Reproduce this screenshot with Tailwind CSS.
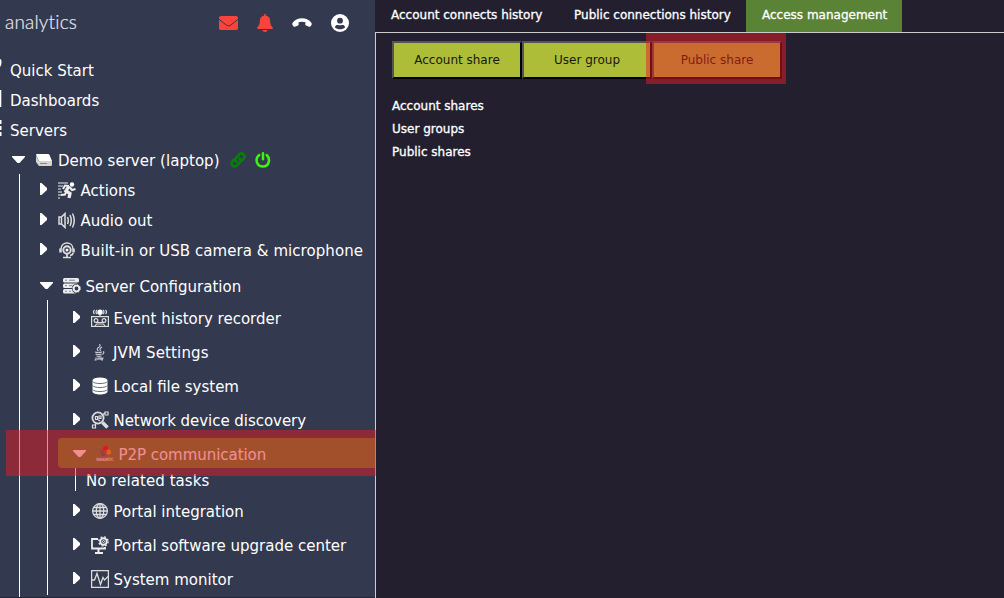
<!DOCTYPE html>
<html lang="en">
<head>
  <meta charset="utf-8">
  <title>Access management</title>
  <script src="https://cdn.jsdelivr.net/npm/@tailwindcss/browser@4"></script>
</head>
<body class="relative w-[1004px] h-[598px] overflow-hidden flex bg-[#231f2f] text-white font-['DejaVu_Sans',sans-serif]">
  <svg class="hidden">
    <symbol id="right" viewBox="0 0 7 12"><path d="M0 0h1.500L7 5v2l-5.500 5H0z" fill="#fff"/></symbol>
    <symbol id="down" viewBox="0 0 13 7"><path d="M0 0h13v1L7.500 7h-2L0 1z" fill="#fff"/></symbol>
  </svg>

  <!-- Sidebar -->
  <aside class="w-[375px] h-[598px] shrink-0 overflow-hidden bg-[#33394f] text-[15px] leading-[22px] whitespace-nowrap border-b border-[#222735] [&_span]:pt-[2px]">
    <header class="h-[55px] flex items-start">
      <div class="w-[219px] pl-[5px] pt-[10px] text-[19px] leading-6 tracking-[0.2px] text-[#e6e8ee] font-light font-['Lato',sans-serif] [-webkit-text-stroke:0.2px_#e6e8ee]">analytics</div>
      <svg class="w-[19px] h-[14px] mt-4" viewBox="0 0 19 14">
        <rect width="19" height="14" rx="1.800" fill="#f8443a"/>
        <path d="M0 3.300l7.600 6q1.900 1.300 3.800 0l7.600-6" fill="none" stroke="#33394f" stroke-width="1"/>
      </svg>
      <svg class="w-4 h-[18px] mt-[14px] ml-[19px]" viewBox="0 0 16 18" fill="#f8443a">
        <path d="M7.200 0h1.600v1.500c2.800.5 4.300 2.500 4.300 5 0 4 1.200 5.500 2.500 6.800.8.800.3 1.700-.7 1.700H1.100c-1 0-1.500-.9-.7-1.700C1.700 12 2.900 10.500 2.900 6.500c0-2.500 1.500-4.500 4.300-5zM5.300 16h5.400c-.4 2.500-5 2.500-5.400 0z"/>
      </svg>
      <svg class="w-5 h-[9px] mt-[18px] ml-[19px]" viewBox="0 0 20 9" fill="#fff">
        <path d="M.5 5C4-1.300 16-1.300 19.500 5c.4.800.3 1.600-.2 2.200l-.9 1.200c-.4.400-.9.500-1.400.300l-3-1.200c-.5-.2-.8-.7-.7-1.200l.2-2c-2.200-.8-4.800-.8-7 0l.2 2c.1.500-.2 1-.7 1.200l-3 1.200c-.5.200-1 .1-1.400-.3L.7 7.200C.2 6.600.1 5.800.5 5z"/>
      </svg>
      <svg class="w-[18px] h-[18px] mt-[14px] ml-[19px]" viewBox="0 0 18 18">
        <circle cx="9" cy="9" r="9" fill="#fff"/>
        <circle cx="9" cy="6.700" r="2.900" fill="#33394f"/>
        <path d="M3.800 13.200c.8-1.900 1.900-2.400 3.200-2.100 1.300.3 2.700.3 4 0 1.300-.3 2.400.2 3.200 2.100-2.700 2.700-7.700 2.700-10.400 0z" fill="#33394f"/>
      </svg>
    </header>

    <!-- Top level links -->
    <nav class="relative">
      <div class="h-[30px] flex items-center pl-[10px]"><span>Quick Start</span></div>
      <div class="h-[30px] flex items-center pl-[10px]"><span>Dashboards</span></div>
      <div class="h-[30px] flex items-center pl-[10px]"><span>Servers</span></div>
      <!-- Icons cut off by the window edge -->
      <svg class="absolute left-0 top-0 w-[2px] h-[90px]" viewBox="0 0 2 90" fill="#fff">
        <path d="M0 4c1 0 1.500 1 1.500 3S1 11 0 12zM0 35h1.300v17H0zM0 65h1.500v4H0zM0 71h1.500v4H0zM0 77h1.500v4H0z"/>
      </svg>
    </nav>

    <!-- Server tree -->
    <div class="h-[30px] flex items-center pl-3">
      <svg class="w-[13px] h-[7px] mb-[2px]"><use href="#down"/></svg>
      <svg class="w-[17px] h-[12px] ml-[11px] mr-[5px]" viewBox="0 0 17 12">
        <path d="M1 0h11q1 0 1.500 1L16 7H3L0 1q0-1 1-1z" fill="#fff"/>
        <path d="M0 2l3 5h13v4q0 1-1 1H3L0 8z" fill="#d4d4d4"/>
        <path d="M4 9.500h7" stroke="#888"/>
      </svg>
      <span class="tracking-[0.04px]">Demo server (laptop)</span>
      <svg class="w-4 h-4 ml-[10px]" viewBox="0 0 16 16" fill="none" stroke="#0c7b12" stroke-width="2.600" stroke-linecap="round">
        <path d="M6.500 9.500C5 8 5.300 6.500 6.400 5.400l2.800-2.900c3-2.700 7 1 4.400 4.200l-1.900 2M9.500 6.500c1.500 1.500 1.200 3 .1 4.100l-2.800 2.900c-3 2.700-7-1-4.400-4.200l1.900-2"/>
      </svg>
      <svg class="w-4 h-4 ml-[9px]" viewBox="0 0 16 16" fill="none" stroke="#3bf50f" stroke-width="2.500" stroke-linecap="round">
        <path d="M4.300 3C-.5 6.600 1.500 14.500 8 14.500S15.500 6.600 11.700 3M8 1.300v6"/>
      </svg>
    </div>

    <div class="-mt-px pt-px ml-[19px] h-[424px] border-l border-white">
      <div class="h-[30px] flex items-center pl-5">
        <svg class="w-[7px] h-3 mb-[2px]"><use href="#right"/></svg>
        <svg class="w-[18px] h-[17px] ml-[11px] mr-[4.500px]" viewBox="0 0 18 17" fill="none" stroke="#eee">
          <path d="M0 1h10M0 4h5M0 7h3M0 10h4M0 13h3M0 16h2" stroke-width="1"/>
          <circle cx="14" cy="2.500" r="2.200" fill="#fff" stroke="none"/>
          <path d="M11 4L8 9l4 2.500-1 4.500" stroke-width="3.300"/>
          <path d="M11 4L7 3.500 5 7M11.500 5l2.500 3 3.500-1M8.500 9L7 12.500l-4 .5" stroke-width="2"/>
        </svg>
        <span>Actions</span>
      </div>
      <div class="h-[30px] flex items-center pl-5">
        <svg class="w-[7px] h-3 mb-[2px]"><use href="#right"/></svg>
        <svg class="w-[18px] h-[17px] ml-[11px] mr-[4.500px]" viewBox="0 0 18 17" fill="none" stroke="#ddd" stroke-width="1.500">
          <path d="M1 5h2.500L7 1.500v14L3.500 12H1zM3.500 5v7M9.500 5q1.500 3.500 0 7M12 3q2.500 5.500 0 11M14.500 1.500q3.500 7 0 14"/>
        </svg>
        <span>Audio out</span>
      </div>
      <div class="h-[30px] flex items-center pl-5">
        <svg class="w-[7px] h-3 mb-[2px]"><use href="#right"/></svg>
        <svg class="w-[18px] h-[17px] ml-[11px] mr-[4.500px]" viewBox="0 0 18 17" fill="none" stroke="#ddd">
          <path d="M3 7C3-1 15-1 15 7" stroke-width="1.400"/>
          <path d="M2.500 6.500v4M15.500 6.500v4" stroke-width="2.500"/>
          <circle cx="9" cy="8" r="3.700" stroke-width="2"/>
          <circle cx="9" cy="8" r="1.500" fill="#fff" stroke="none"/>
          <path d="M9 12v3M5 15.500h8M15 11q0 2-3 2.500" stroke-width="1.700"/>
        </svg>
        <span class="tracking-[0.060px]">Built-in or USB camera &amp; microphone</span>
      </div>

      <div class="h-9 pt-[6px] flex items-center pl-5">
        <svg class="w-[13px] h-[7px] mb-[2px]"><use href="#down"/></svg>
        <svg class="w-[18px] h-4 ml-[10px] mr-[4.500px]" viewBox="0 0 18 16">
          <g fill="#eee">
            <rect width="16" height="4.500" rx="1.500"/>
            <rect y="5.500" width="15" height="4.500" rx="1.500"/>
            <rect y="11" width="13" height="4.500" rx="1.500"/>
          </g>
          <path d="M2 2.200h2M6 2.200h6M2 7.700h2M6 7.700h3M2 13.200h2M6 13.200h2" stroke="#7d8398" stroke-width="1"/>
          <circle cx="13.500" cy="10.500" r="4.800" fill="#33394f"/>
          <circle cx="13.500" cy="10.500" r="2.800" fill="none" stroke="#eee" stroke-width="1.800"/>
          <circle cx="13.500" cy="10.500" r="3.900" fill="none" stroke="#eee" stroke-dasharray="1.530"/>
        </svg>
        <span>Server Configuration</span>
      </div>

      <!-- Configuration children -->
      <div class="-mt-px pt-px ml-[27px] h-[295px] border-l border-white">
        <div class="h-[34px] flex items-center pl-[25px]">
          <svg class="w-[7px] h-3 mb-[2px]"><use href="#right"/></svg>
          <svg class="w-[18px] h-[18px] ml-[11px] mr-[4.500px]" viewBox="0 0 18 18" fill="none" stroke="#ddd" stroke-width="1.200">
            <rect x=".6" y="7.600" width="16.800" height="9.800"/>
            <circle cx="5" cy="11.500" r="1.900"/><circle cx="13" cy="11.500" r="1.900"/>
            <path d="M5 13.500h8M4 17l1.500-2h7l1.500 2M6 1q-2 2 0 4M12 1q2 2 0 4M3.500 1q-2 2 0 4M14.500 1q2 2 0 4"/>
            <circle cx="9" cy="3.200" r="2.700" fill="#fff" stroke="none"/>
            <path d="M9 5v3"/>
          </svg>
          <span>Event history recorder</span>
        </div>
        <div class="h-[34px] flex items-center pl-[25px]">
          <svg class="w-[7px] h-3 mb-[2px]"><use href="#right"/></svg>
          <svg class="w-[18px] h-[18px] ml-[10px] mr-[5px]" viewBox="0 0 18 18" fill="none" stroke="#c9ccd5" stroke-width="1.200">
            <path d="M9.500 1q1.500 2-1 3.500t0 3.500M12 4q-3 1.500-1.500 4M5 9q3 1 7 0M5.500 11q3 1 6 0M6.500 13q2.500.6 5 0M13 8.500q2 .5-.5 3"/>
            <path d="M6 14.500v2.500H4.500M8 17v-2h2v2M11 14.500l1 2.500 1.200-2.500"/>
          </svg>
          <span class="tracking-[0.150px]">JVM Settings</span>
        </div>
        <div class="h-[34px] flex items-center pl-[25px]">
          <svg class="w-[7px] h-3 mb-[2px]"><use href="#right"/></svg>
          <svg class="w-[18px] h-[18px] ml-[11px] mr-[4.500px]" viewBox="0 0 18 18">
            <path d="M1.500 3.500v11c0 4 15 4 15 0v-11z" fill="#fff"/>
            <ellipse cx="9" cy="3.300" rx="7.500" ry="2.800" fill="#fff"/>
            <path d="M1.500 4.300c1 3 14 3 15 0M1.500 8.300c1 3 14 3 15 0M1.500 12.300c1 3 14 3 15 0" fill="none" stroke="#6a6f83"/>
          </svg>
          <span>Local file system</span>
        </div>
        <div class="h-[34px] flex items-center pl-[25px]">
          <svg class="w-[7px] h-3 mb-[2px]"><use href="#right"/></svg>
          <svg class="w-[18px] h-[18px] ml-[11px] mr-[4.500px]" viewBox="0 0 18 18" fill="none" stroke="#ddd" stroke-width="1.200">
            <circle cx="7" cy="7" r="5.600" stroke-width="1.800"/>
            <path d="M4.500 5.500h2v3h-2zM8 5h2v2.500H8zM6 8l3 2M11 4l3-2"/>
            <path d="M11.500 11.500l5 5" stroke-width="3.500"/>
            <path d="M14 1h3v3h-3zM1.500 14h3v3h-3zM5 13l-1 1"/>
          </svg>
          <span class="tracking-[-0.040px]">Network device discovery</span>
        </div>
        <div class="mt-px ml-[10px] h-[30px] pt-[2px] rounded-l-[4px] bg-[#5d8533] flex items-center pl-[15px]">
          <svg class="w-[13px] h-[7px] mb-[2px]"><use href="#down"/></svg>
          <svg class="w-[18px] h-[18px] ml-[10px] mr-[4.500px]" viewBox="0 0 18 18">
            <circle cx="9.500" cy="3.500" r="2.600" fill="#d11"/>
            <circle cx="6" cy="6" r="2" fill="#5a6670"/>
            <circle cx="12.500" cy="7" r="2.600" fill="#f29a1c"/>
            <circle cx="7.500" cy="9" r="2.500" fill="#5d5475"/>
            <circle cx="9.700" cy="6.800" r="1.600" fill="#5d8533"/>
            <text x="0" y="15.500" font-size="4.500" font-weight="bold" textLength="18" fill="#fff" fill-opacity=".8">WebRTC</text>
          </svg>
          <span class="tracking-[-0.040px]">P2P communication</span>
        </div>
        <div class="ml-[27px] h-[23px] border-l border-white flex items-center pl-[10px]"><span class="tracking-[0.060px]">No related tasks</span></div>
        <div class="mt-[3px] h-[34px] flex items-center pl-[25px]">
          <svg class="w-[7px] h-3 mb-[2px]"><use href="#right"/></svg>
          <svg class="w-[18px] h-[18px] ml-[11px] mr-[4.500px]" viewBox="0 0 18 18" fill="none" stroke="#ddd" stroke-width="1.300">
            <circle cx="9" cy="9" r="7.300"/>
            <ellipse cx="9" cy="9" rx="3.700" ry="7.300"/>
            <path d="M9 1.500v15M1.500 9h15M2.500 5.500h13M2.500 12.500h13"/>
          </svg>
          <span>Portal integration</span>
        </div>
        <div class="h-[34px] flex items-center pl-[25px]">
          <svg class="w-[7px] h-3 mb-[2px]"><use href="#right"/></svg>
          <svg class="w-[18px] h-[18px] ml-[11px] mr-[4.500px]" viewBox="0 0 18 18" fill="none" stroke="#eee">
            <path d="M7 3H1v9.500h13V11" stroke-width="1.800"/>
            <path d="M7.500 13v3M4 17h8" stroke-width="2"/>
            <circle cx="12.500" cy="5.500" r="3.300" stroke-width="1.900"/>
            <circle cx="12.500" cy="5.500" r="4.700" stroke-width="1.300" stroke-dasharray="1.850"/>
            <circle cx="12.500" cy="5.500" r="1"/>
          </svg>
          <span>Portal software upgrade center</span>
        </div>
        <div class="h-[34px] flex items-center pl-[25px]">
          <svg class="w-[7px] h-3 mb-[2px]"><use href="#right"/></svg>
          <svg class="w-[18px] h-[18px] ml-[11px] mr-[4.500px]" viewBox="0 0 18 18" fill="none" stroke="#ddd" stroke-width="1.300">
            <rect x=".6" y=".6" width="16.800" height="16.800"/>
            <path d="M1 10h2.500L6 3.500l3.500 11 2.500-7 1.500 2.500L17 6.500"/>
          </svg>
          <span>System monitor</span>
        </div>
      </div>
    </div>
  </aside>

  <!-- Main panel -->
  <main class="flex-1 flex flex-col text-[12px] whitespace-nowrap">
    <div class="h-8 flex leading-[30px] [-webkit-text-stroke:0.3px_#fff]">
      <div class="w-[183px] pl-4">Account connects history</div>
      <div class="w-[188px] pl-4">Public connections history</div>
      <div class="w-[156px] pl-4 bg-[#5b8335]">Access management</div>
    </div>
    <div class="flex-1 border-t border-l border-[#ccc] pl-4 pt-2">
      <div class="flex text-[#17180c]">
        <div class="w-[130px] h-[38px] border-2 border-t-[#555] border-l-[#555] border-r-black border-b-black bg-[#adbd38] text-center leading-[34px]">Account share</div>
        <div class="w-[130px] h-[38px] border-2 border-t-[#555] border-l-[#555] border-r-black border-b-black bg-[#adbd38] text-center leading-[34px]">User group</div>
        <div class="w-[130px] h-[38px] border-2 border-t-[#555] border-l-[#555] border-r-black border-b-black bg-[#adbd38] text-center leading-[34px]">Public share</div>
      </div>
      <div class="mt-4 leading-[23px] [-webkit-text-stroke:0.3px_#fff]">
        <p>Account shares</p>
        <p>User groups</p>
        <p>Public shares</p>
      </div>
    </div>
  </main>

  <!-- Highlights -->
  <div class="absolute left-[6px] top-[430px] w-[370px] h-[46px] bg-[#e71b26]/50"></div>
  <div class="absolute left-[646px] top-[33px] w-[140px] h-[51px] bg-[#e71b26]/50"></div>
</body>
</html>
